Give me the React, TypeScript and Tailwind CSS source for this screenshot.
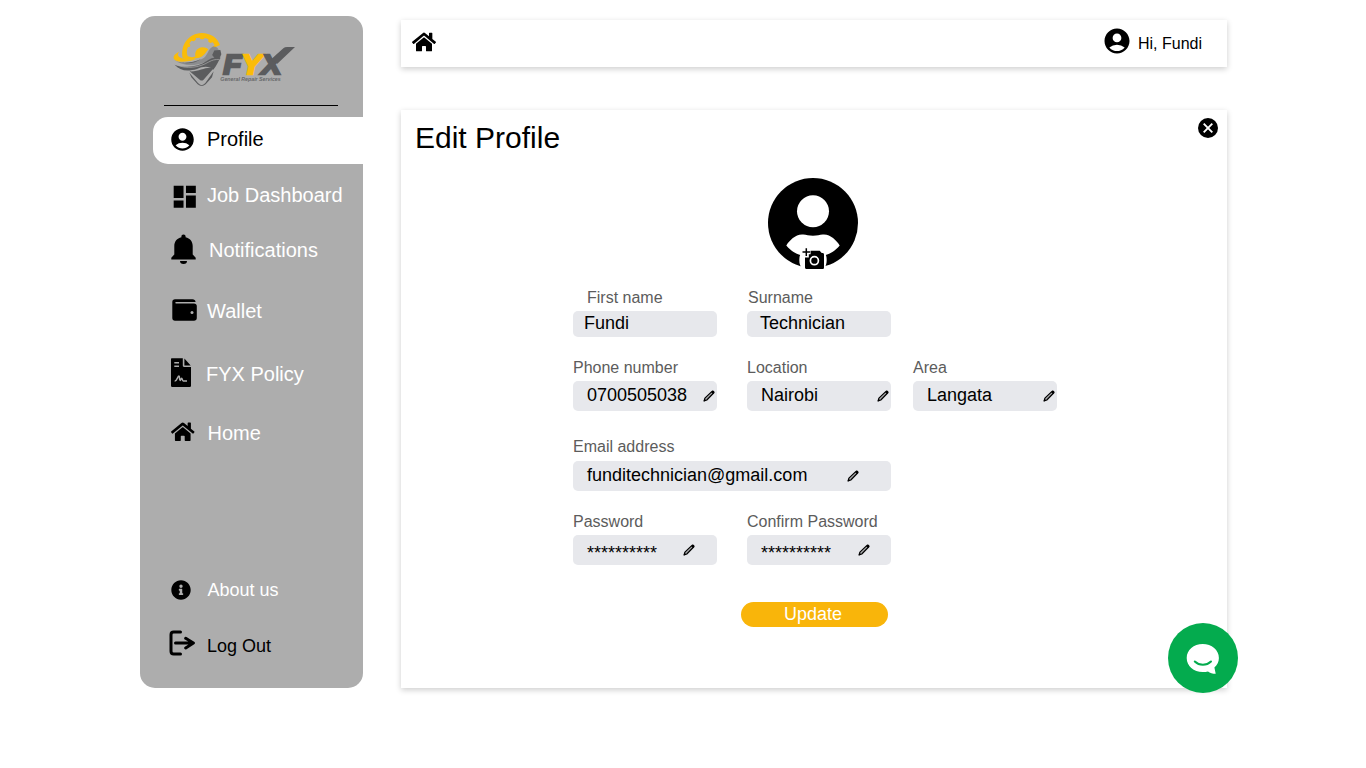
import type { ReactNode } from "react";
import { MdAccountCircle, MdDashboard } from "react-icons/md";
import { FaHome, FaInfoCircle } from "react-icons/fa";

function Logo() {
  return (
    <svg viewBox="0 0 435 210" className="block h-[70px] w-[145px]">
      <path d="M68 100 C60 60 86 25 125 24 C152 25 172 38 180 60 L165 67 C158 70 152 76 148 84 L100 102 Q84 104 68 100Z" fill="#fabc09" />
      <path d="M83 94 C79 84 80 74 84 66 L89 66 L91 60 L88 55 L95 47 L101 49 L107 45 L108 39 L119 38 L122 43 L130 43 L135 39 L145 43 L145 50 L151 54 L158 52 L164 60 L152 70 L146 84 L112 93 L96 97Z" fill="#adadad" />
      <path d="M108 100 C100 82 112 68 127 67 C138 67 145 72 149 78 L146 94Z" fill="#fabc09" />
      <path d="M58 80 C44 86 38 95 42 102 C49 115 84 111 113 101 C90 105 63 103 56 94 C52 89 54 84 58 80Z" fill="#fabc09" />
      <path d="M120 97 C138 90 139 72 157 65 L182 74 L184 92 L160 102 L132 112Z" fill="#adadad" />
      <path d="M42 106 C63 119 100 114 126 102 C145 92 141 75 158 65 C164 63 172 66 176 74 L163 76 L156 90 L163 98 C150 103 140 110 126 115 C100 124 66 122 42 106Z" fill="#8b8c8e" />
      <path d="M42 105 C63 119 100 113 124 101 C102 118 67 119 42 105Z" fill="#5b5c5e" />
      <path d="M44 119 C78 130 115 126 140 108 C153 99 162 96 182 98 C174 109 171 120 160 134 C147 122 129 124 111 132 C80 141 59 136 44 119Z" fill="#5b5c5e" />
      <path d="M48 119 C78 133 118 128 146 111 C157 105 165 103 178 103" fill="none" stroke="#adadad" strokeWidth="2" />
      <path d="M163 76 L181 75 L184 88 L178 101 L165 101 L156 90Z" fill="#5b5c5e" />
      <path d="M89 139 C119 141 137 123 161 130 L130 165 Q125 169 119 164Z" fill="#5b5c5e" />
      <path d="M88 143 L114 174 Q125 187 136 174 L161 139 L156 157 L137 178 Q125 188 113 178 L94 157Z" fill="#5b5c5e" />
      <g fontFamily="'Liberation Sans', sans-serif" fontWeight="700" fontStyle="italic">
        <text x="190" y="146" fontSize="82" strokeWidth="7" textLength="174" lengthAdjust="spacingAndGlyphs">
          <tspan fill="#5b5c5e" stroke="#5b5c5e">F</tspan>
          <tspan fill="#fabc09" stroke="#fabc09">Y</tspan>
          <tspan fill="#5b5c5e" stroke="#5b5c5e">X</tspan>
        </text>
        <text x="181" y="169" fontSize="15" fill="#68696b" textLength="181" lengthAdjust="spacingAndGlyphs">General Repair Services</text>
      </g>
      <path d="M332 104 L370 70 Q374 66 382 66 L405 66 L352 116Z" fill="#5b5c5e" />
    </svg>
  );
}

function BellIcon() {
  return (
    <svg viewBox="0 0 25 30" className="block h-[30px] w-[25px]">
      <path d="M12.500 .5c-1.300 0-2.100.9-2.100 2v.7C6 4.200 3.300 7.400 3.300 12v8.500L.3 23.700v1.700h24.400v-1.700l-3-3.200V12c0-4.600-2.700-7.800-7.100-8.800v-.7c0-1.100-.8-2-2.100-2Z" />
      <path d="M9 27h7a3.500 3 0 0 1-7 0Z" />
    </svg>
  );
}

function WalletIcon() {
  return (
    <svg viewBox="0 0 25 22" className="block h-[22px] w-[25px]">
      <path d="M3 .3h17.500c1.700 0 2.900 1 3.100 2.700H4c-.9 0-.9 1.400 0 1.400h18c1.700 0 2.800 1.100 2.800 2.700v11.800c0 1.700-1.200 2.800-2.800 2.800H3c-1.600 0-2.700-1.100-2.700-2.800V3C.3 1.400 1.400.3 3 .3Z" />
      <circle cx="20" cy="13.400" r="1.500" fill="#adadad" />
    </svg>
  );
}

function PolicyIcon() {
  return (
    <svg viewBox="0 0 20 29" className="block h-[29px] w-[20px]">
      <path d="M1 .3h10.800v7.200c0 1 .4 1.400 1.300 1.400H20v18.800c0 .8-.4 1.200-1.200 1.200H1c-.7 0-1-.4-1-1.200V1.300C0 .6.3.3 1 .3ZM13.400.5l6.300 6.900h-6.300Z" />
      <path d="M3.300 4.700h4.700M3.300 8.300h4.700M3.700 23c2.300.2 2.900-5 4.300-5 1 0 .1 4.400 1.100 4.400.8 0 .8-2.200 1.500-2.200.8 0 .6 2.700 1.600 2.700h3.800" fill="none" stroke="#adadad" strokeWidth="1.500" />
    </svg>
  );
}

function LogoutIcon() {
  return (
    <svg viewBox="0 0 26 26" className="block h-[26px] w-[26px]" fill="none" stroke="black" strokeWidth="3" strokeLinecap="round" strokeLinejoin="round">
      <path d="M11.500 2H4.700Q2 2 2 4.700v16.600Q2 24 4.700 24h6.800M6.500 13h17.500M16.700 8.300l7.700 4.700-7.700 5" />
    </svg>
  );
}

function Pencil() {
  return (
    <svg viewBox="0 0 12 12" className="block h-3 w-3 shrink-0">
      <path d="M1.100 10.900l.8-2.800L9 1.400c.4-.4.8-.4 1.200 0l.4.400c.4.4.4.8 0 1.200L3.800 10Z" fill="#a9aaad" stroke="black" strokeWidth="1.200" strokeLinejoin="round" />
      <path d="M8.100 2.200L9.300 1c.5-.4 1-.4 1.400 0l.3.300c.5.500.5 1 0 1.500L9.900 4ZM.6 11.500l.8-2.700 2 1.800Z" />
    </svg>
  );
}

function Avatar() {
  return (
    <svg viewBox="0 0 90 92" className="block h-[92px] w-[90px]">
      <circle cx="45" cy="45" r="45" />
      <circle cx="45" cy="33.300" r="16" fill="white" />
      <path d="M18.300 67.500C22 62 27 57 34 56.600c4-.4 6 1.200 11 1.200s7-1.600 11-1.200c7 .4 12 5.400 15.700 10.900C67 73 63 75.500 57 77.200v15H33v-15C27 75.500 23 73 18.300 67.500Z" fill="white" />
      <ellipse cx="45" cy="82" rx="13.700" ry="15" fill="white" />
      <path d="M42.600 72.800h9.100l2 2.300h.8c1 0 1.500.6 1.500 1.500v12.800c0 1-.6 1.500-1.500 1.500H38.500c-1 0-1.500-.6-1.500-1.500V79.500h3.800v-3.300h1.800Z" />
      <path d="M38.300 70.300v7.600M34.500 74.100h7.600" stroke="black" strokeWidth="1.500" />
      <circle cx="46.400" cy="82.700" r="4" fill="black" stroke="white" strokeWidth="1.700" />
    </svg>
  );
}

type NavProps = { label: string; row: string; gap: string; icon: ReactNode; text?: string };

function NavItem({ label, row, gap, icon, text = "text-xl text-white" }: NavProps) {
  return (
    <a className={`flex shrink-0 items-center ${row}`}>
      <span className={`shrink-0 ${gap}`}>{icon}</span>
      <span className={`whitespace-nowrap ${text}`}>{label}</span>
    </a>
  );
}

type FieldProps = {
  label: string;
  value: string;
  edit?: boolean;
  labelClass?: string;
  boxClass?: string;
  valueClass?: string;
};

function Field({ label, value, edit = false, labelClass = "mb-[3px]", boxClass = "h-[30px] pl-3.5 pr-[2px]", valueClass = "-mt-[3px]" }: FieldProps) {
  return (
    <div className="flex flex-col">
      <label className={`text-base leading-5 text-[#5c5c5c] ${labelClass}`}>{label}</label>
      <div className={`flex items-center justify-between rounded-[5px] bg-[#e7e8ec] text-lg leading-6 ${boxClass}`}>
        <span className={valueClass}>{value}</span>
        {edit && <Pencil />}
      </div>
    </div>
  );
}

export default function App() {
  return (
    <div className="flex h-screen items-start overflow-hidden bg-white pl-[140px] pt-4 font-['Liberation_Sans',sans-serif] text-black">
      <aside className="flex h-[672px] w-[223px] shrink-0 flex-col rounded-[15px] bg-[#adadad] pb-[9px]">
        <div className="ml-5 mt-[9px] h-[70px]"><Logo /></div>
        <div className="mb-[11px] ml-6 mt-[9.500px] h-[1.500px] w-[174px] shrink-0 bg-black" />
        <NavItem label="Profile" row="ml-[13px] h-[47px] rounded-l-[15px] bg-white pl-4" gap="w-[38px] -mt-[2px]" text="text-xl text-black -mt-[3px]" icon={<MdAccountCircle size={27} />} />
        <NavItem label="Job Dashboard" row="h-[63px] pl-[30px]" gap="w-[37px] mt-[3px]" text="text-xl text-white -mt-[2px]" icon={<MdDashboard size={29.500} />} />
        <NavItem label="Notifications" row="h-[46px] pl-[31px]" gap="w-[38px] -mt-[2px]" icon={<BellIcon />} />
        <NavItem label="Wallet" row="h-[76px] pl-8" gap="w-[35px] -mt-[2px]" icon={<WalletIcon />} />
        <NavItem label="FYX Policy" row="h-[50px] pl-[31px]" gap="w-[35px] -mt-[3px]" icon={<PolicyIcon />} />
        <NavItem label="Home" row="h-[68px] pl-[31px]" gap="w-[36.500px] -mt-[2px]" icon={<FaHome size={23.500} />} />
        <div className="flex-1" />
        <NavItem label="About us" row="h-[46px] pl-[31px]" gap="w-[36.500px]" text="text-lg text-white" icon={<FaInfoCircle size={20} />} />
        <NavItem label="Log Out" row="h-[66px] pl-[29px]" gap="w-[38px] -mt-[6px]" text="text-lg text-black" icon={<LogoutIcon />} />
      </aside>

      <main className="ml-[38px] mt-1 flex w-[826px] flex-col">
        <header className="flex h-[47px] items-center bg-white pl-[11px] pr-[25px] shadow-[0_2px_6px_rgba(0,0,0,0.2)]">
          <FaHome size={24} className="-mt-[3px]" />
          <MdAccountCircle size={30} className="-mt-[6px] ml-auto" />
          <span className="ml-[6px] text-base">Hi, Fundi</span>
        </header>

        <section className="mt-[43px] flex h-[578px] flex-col bg-white shadow-[0_2px_6px_rgba(0,0,0,0.2)]">
          <div className="flex h-[68px] shrink-0 items-start justify-between pl-[14px] pr-[9px] pt-2">
            <h1 className="text-[30px] leading-10">Edit Profile</h1>
            <svg viewBox="0 0 20 20" className="h-5 w-5">
              <circle cx="10" cy="10" r="10" />
              <path d="M5.700 5.700l8.600 8.600m0-8.600l-8.600 8.600" stroke="white" strokeWidth="1.900" />
            </svg>
          </div>
          <div className="ml-[367px]"><Avatar /></div>
          <form className="ml-[172px] mt-[18px] flex flex-col">
            <div className="grid grid-cols-[144px_144px] gap-x-[30px]">
              <Field label="First name" value="Fundi" labelClass="mb-[3px] pl-3.5" boxClass="h-[26px] pl-[11px]" valueClass="-mt-[2px]" />
              <Field label="Surname" value="Technician" labelClass="mb-[3px] pl-px" boxClass="h-[26px] pl-[13px]" valueClass="-mt-[2px]" />
            </div>
            <div className="mt-[21px] flex">
              <div className="w-[144px]"><Field label="Phone number" value="0700505038" edit /></div>
              <div className="ml-[30px] w-[144px]"><Field label="Location" value="Nairobi" edit /></div>
              <div className="ml-[22px] w-[144px]"><Field label="Area" value="Langata" edit /></div>
            </div>
            <div className="mt-[26px] w-[318px]">
              <Field label="Email address" value="funditechnician@gmail.com" edit labelClass="mb-1" boxClass="h-[30px] pl-3.5 pr-8" />
            </div>
            <div className="mt-[21px] grid grid-cols-[144px_144px] gap-x-[30px]">
              <Field label="Password" value="**********" edit boxClass="h-[30px] pl-3.5 pr-[22px]" valueClass="mt-[5px]" />
              <Field label="Confirm Password" value="**********" edit boxClass="h-[30px] pl-3.5 pr-[21px]" valueClass="mt-[5px]" />
            </div>
            <button type="button" className="ml-[168px] mt-[37px] flex h-[25px] w-[147px] items-center justify-center rounded-full bg-[#f9b50a] pb-[2px] pr-[3px] text-lg leading-6 text-white">
              Update
            </button>
          </form>
        </section>
      </main>

      <button type="button" className="absolute left-[1168px] top-[623px] h-[70px] w-[70px] rounded-full bg-[#04ab4e]">
        <svg viewBox="0 0 70 70" className="block h-[70px] w-[70px]">
          <path d="M34.700 21c9 0 16.200 6 16.200 14 0 3.800-1.700 7-4.500 9.500l1.300 6.200c-3 0-5.800-.8-7.700-2.300-1.600.4-3.400.6-5.300.6-9 0-16-6-16-14s7-14 16-14Z" fill="white" />
          <path d="M26.800 38.500c4.500 4.400 11.700 4.400 16.200 0" fill="none" stroke="#04ab4e" strokeWidth="2" strokeLinecap="round" />
        </svg>
      </button>
    </div>
  );
}
